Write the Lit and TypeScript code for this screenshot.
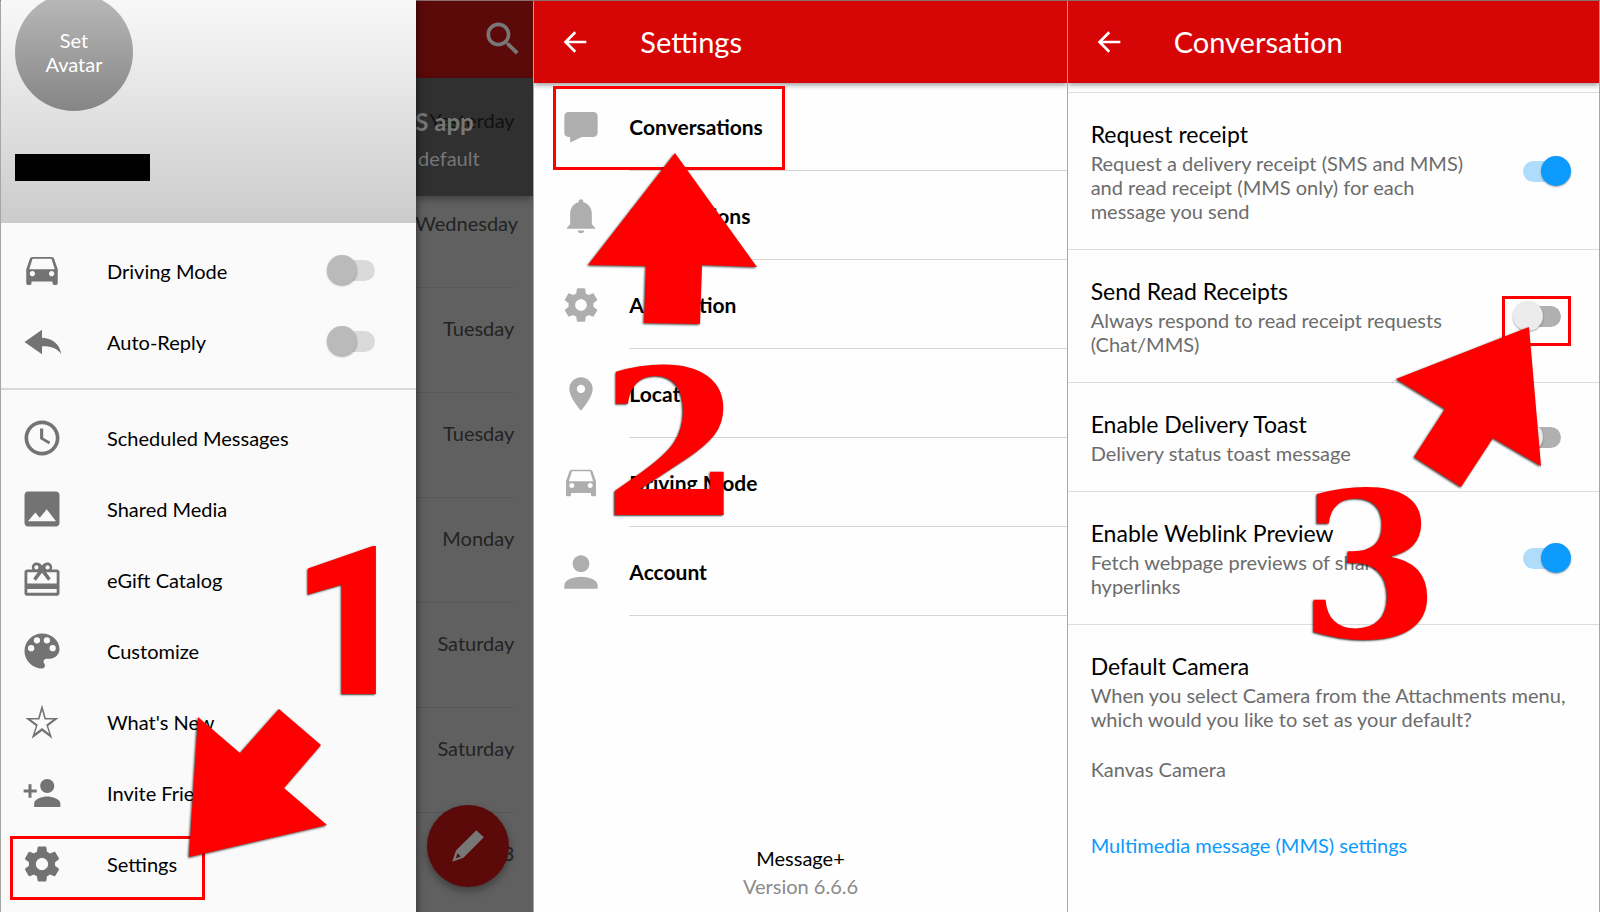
import { LitElement, html, css, svg } from "lit";
import { customElement } from "lit/decorators.js";

const ICONS: Record<string, string> = {
  car: "M18.92 5.01C18.72 4.42 18.16 4 17.5 4h-11c-.66 0-1.21.42-1.42 1.01L3 11v8c0 .55.45 1 1 1h1c.55 0 1-.45 1-1v-1h12v1c0 .55.45 1 1 1h1c.55 0 1-.45 1-1v-8l-2.08-5.99zM6.5 15c-.83 0-1.5-.67-1.5-1.5S5.67 12 6.5 12s1.5.67 1.5 1.5S7.33 15 6.5 15zm11 0c-.83 0-1.5-.67-1.5-1.5s.67-1.5 1.5-1.5 1.5.67 1.5 1.5-.67 1.5-1.5 1.5zM4.7 11l1.9-6h10.800L19.300 11z",
  reply: "M12 9.500V5L2 12l10 7v-4.500c4.500-.2 8.500.8 11 4.500-.8-5.500-4.500-9.200-11-9.500z",
  clock: "M11.990 2C6.470 2 2 6.480 2 12s4.470 10 9.990 10C17.520 22 22 17.520 22 12S17.520 2 11.990 2zM12 19.900c-4.400 0-7.900-3.500-7.900-7.900S7.600 4.100 12 4.100s7.900 3.500 7.900 7.900-3.500 7.900-7.900 7.900zM12.700 6.500h-1.800v6.100l5 3 .9-1.400-4.100-2.400z",
  image: "M22 20V4c0-1.100-.9-2-2-2H4c-1.100 0-2 .9-2 2v16c0 1.100.9 2 2 2h16c1.100 0 2-.9 2-2zM8.200 14l2.500 3.010L14.700 12.200l5.300 6.800H4l4.200-5z",
  gift: "M20.500 6h-3a2.800 2.800 0 0 0 .3-1.300C17.800 3.200 16.600 2 15.100 2c-1.200 0-2.300.6-3.100 1.700C11.200 2.600 10.100 2 8.900 2 7.400 2 6.200 3.200 6.200 4.700c0 .5.1.9.3 1.300h-3C2.700 6 2 6.700 2 7.500v12c0 .8.700 1.500 1.500 1.500h17c.8 0 1.500-.7 1.500-1.500v-12c0-.8-.7-1.500-1.500-1.500zM15.200 3.600a1.200 1.200 0 1 1 0 2.400 1.200 1.200 0 0 1 0-2.400zM8.800 3.600a1.200 1.200 0 1 1 0 2.400 1.200 1.200 0 0 1 0-2.400zM20.400 19.300H3.600v-2.100h16.800zm0-5.300H3.600V7.600h6L7 11.200l1.500 1.200L12 7.900l3.500 4.500 1.500-1.200-2.600-3.600h6z",
  palette: "M12 2C6.490 2 2 6.490 2 12s4.490 10 10 10c1 0 1.700-.8 1.700-1.700 0-.4-.2-.8-.4-1.100-.3-.3-.4-.7-.4-1.100 0-.9.700-1.700 1.700-1.700h2c3 0 5.400-2.500 5.400-5.500C22 6 17.500 2 12 2zM5.800 12.200a1.800 1.800 0 1 1 0-3.600 1.800 1.800 0 0 1 0 3.600zm3.300-4.500a1.800 1.800 0 1 1 0-3.600 1.800 1.800 0 0 1 0 3.600zm5.700 0a1.800 1.800 0 1 1 0-3.600 1.800 1.800 0 0 1 0 3.600zm3.300 4.500a1.800 1.800 0 1 1 0-3.600 1.800 1.800 0 0 1 0 3.600z",
  star: "M12 2l-2.200 7.700H2.500l6 4.600L6.100 21.500 12 17.100l5.900 4.400-2.400-7.200 6-4.600h-7.300zm0 3.400l1.500 5.200h4.900l-4 3 1.700 4.900-4.100-3.100-4.100 3.100 1.700-4.900-4-3h4.900z",
  invite: "M15 12c2.210 0 4-1.790 4-4s-1.790-4-4-4-4 1.790-4 4 1.790 4 4 4zM6 10V7H4.300v3H1.500v1.700h2.800v3H6v-3h3V10H6zm9 4c-2.670 0-7.500 1.340-7.500 4v2H22.500v-2c0-2.660-4.830-4-7.500-4z",
  gear: "M19.430 12.980c.04-.32.07-.64.07-.98s-.03-.66-.07-.98l2.110-1.650c.19-.15.24-.42.12-.64l-2-3.460c-.12-.22-.39-.3-.61-.22l-2.490 1c-.52-.4-1.080-.73-1.690-.98l-.38-2.650C14.460 2.180 14.250 2 14 2h-4c-.25 0-.46.18-.49.42l-.38 2.650c-.61.25-1.170.59-1.690.98l-2.490-1c-.23-.09-.49 0-.61.22l-2 3.460c-.13.22-.07.49.12.64l2.110 1.650c-.04.32-.07.65-.07.98s.03.66.07.98l-2.110 1.650c-.19.15-.24.42-.12.64l2 3.460c.12.22.39.3.61.22l2.490-1c.52.4 1.080.73 1.690.98l.38 2.650c.03.24.24.42.49.42h4c.25 0 .46-.18.49-.42l.38-2.650c.61-.25 1.170-.59 1.690-.98l2.490 1c.23.09.49 0 .61-.22l2-3.460c.12-.22.07-.49-.12-.64l-2.110-1.650zM12 15.500c-1.930 0-3.500-1.570-3.500-3.500s1.570-3.500 3.500-3.500 3.500 1.570 3.500 3.500-1.570 3.500-3.500 3.500z",
  chat: "M19.500 3h-15C3.100 3 2 4.100 2 5.500v10C2 16.900 3.100 18 4.500 18h1v3.300l7-3.300h7c1.400 0 2.500-1.100 2.500-2.500v-10C22 4.100 20.900 3 19.500 3z",
  bell: "M12 22.300c1.100 0 2-.7 2-1.600h-4c0 .9.900 1.600 2 1.600zM18.500 17v-6.500c0-3.300-2-6.100-5.100-6.800V3.300C13.400 2.500 12.800 2 12 2s-1.400.5-1.400 1.300v.4c-3.100.7-5.100 3.500-5.100 6.800V17L3.500 19v.6h17V19z",
  pin: "M12 2C8.130 2 5 5.130 5 9c0 5.250 7 13 7 13s7-7.750 7-13c0-3.870-3.130-7-7-7zm0 9.500c-1.380 0-2.500-1.120-2.500-2.500s1.120-2.500 2.500-2.500 2.500 1.120 2.500 2.500-1.120 2.500-2.500 2.500z",
  person: "M12 12c2.760 0 5-2.240 5-5s-2.240-5-5-5-5 2.240-5 5 2.240 5 5 5zM12 14.800c-4 0-10 1.700-10 5V22h20v-2.200c0-3.300-6-5-10-5z",
  back: "M20.500 11H7.300l5.600-5.600L11.500 4l-8 8 8 8 1.400-1.400L7.300 13h13.200z",
  search: "M15.500 14h-.79l-.28-.27C15.410 12.590 16 11.110 16 9.500 16 5.910 13.090 3 9.500 3S3 5.910 3 9.500 5.910 16 9.500 16c1.610 0 3.090-.59 4.230-1.570l.27.28v.79l5 4.990L20.490 19l-4.990-5zm-6 0C7 14 5 12 5 9.500S7 5 9.500 5 14 7 14 9.500 12 14 9.500 14z",
  pencil: "M2.500 21.500l2.300-6.800L17 2.500l4.500 4.200L9.300 19zM4.700 19.300l2.900-1-1.900-1.900z",
};

const icon = (name: string, cls = "icon") =>
  html`<svg class=${cls} viewBox="0 0 24 24" aria-hidden="true"><path fill-rule="evenodd" d=${ICONS[name]} /></svg>`;

const arrow = (w: number, h: number, points: string) =>
  html`<svg class="arrow" width=${w} height=${h} viewBox="0 0 ${w} ${h}" aria-hidden="true">${svg`<polygon points=${points} />`}</svg>`;

const shared = css`
  * { box-sizing: border-box; }
  :host {
    display: block;
    position: relative;
    min-width: 0;
    overflow: hidden;
    border-left: 1px solid #a6a6a6;
    font-family: Lato, "Open Sans", sans-serif;
    color: #000;
  }
  button {
    font: inherit;
    color: inherit;
    background: none;
    border: 0;
    padding: 0;
    text-align: left;
  }
  svg { display: block; fill: currentColor; flex: none; }
  .icon { width: 40px; height: 40px; }
  .switch {
    appearance: none;
    position: relative;
    flex: none;
    width: 38px;
    height: 21px;
    margin: 0 10px;
    border-radius: 11px;
    background: #b0b0b0;
  }
  .switch::before {
    content: "";
    position: absolute;
    top: -5px;
    left: -10px;
    width: 30px;
    height: 30px;
    border-radius: 50%;
    background: #ececec;
    box-shadow: 0 1px 2px rgba(0, 0, 0, 0.35);
  }
  .switch:checked { background: #b0dcfc; }
  .switch:checked::before { left: 18px; background: #0c9afc; }
  .appbar {
    position: relative;
    display: flex;
    align-items: center;
    height: 83px;
    padding: 0 25px;
    gap: 49px;
    background: #d60606;
    color: #fff;
    box-shadow: 0 2px 5px rgba(0, 0, 0, 0.4);
  }
  .appbar h1 { margin: 0; font-size: 29px; line-height: 36px; font-weight: 400; }
  .back { width: 32px; height: 32px; }
  .arrow, .step, .frame { position: absolute; pointer-events: none; z-index: 3; }
  .arrow { fill: #f00; overflow: visible; filter: drop-shadow(-1px 1px 1px rgba(0, 0, 0, 0.75)); }
  .step {
    color: #f00;
    font-family: "DejaVu Serif", serif;
    font-weight: 700;
    font-size: 202px;
    line-height: 200px;
    text-shadow: -1px 1px 2px rgba(0, 0, 0, 0.75);
  }
  .frame { border: 3px solid #f00; }
`;

@customElement("drawer-screen")
class DrawerScreen extends LitElement {
  static styles = [
    shared,
    css`
      :host { display: flex; background: #606060; }
      .drawer {
        position: relative;
        z-index: 1;
        flex: none;
        width: 78%;
        margin-right: -1px;
        background: #fafafa;
        box-shadow: 1px 0 8px rgba(0, 0, 0, 0.5);
      }
      .profile {
        height: 223px;
        padding: 0 14px;
        overflow: hidden;
        background: linear-gradient(#f8f8f8, #cbcbcb);
      }
      .avatar {
        display: grid;
        place-content: center;
        width: 118px;
        height: 118px;
        margin-top: -7px;
        border-radius: 50%;
        background: linear-gradient(#bababa, #858585);
        color: #fff;
        font-size: 20px;
        line-height: 24px;
        text-align: center;
      }
      .redacted { width: 135px; height: 27px; margin-top: 43px; background: #000; }
      .group { padding: 12px 0 11px; }
      .group + .group { border-top: 2px solid #d8d8d8; }
      .item {
        display: flex;
        align-items: center;
        width: 100%;
        height: 71px;
        padding: 0 31px 0 20px;
        gap: 44px;
        font-size: 20px;
      }
      .item .icon { color: #737373; width: 42px; height: 42px; }
      .item .label { flex: 1; }
      .item .switch { background: #dadada; }
      .item .switch::before { background: #bababa; }
      .behind {
        flex: 1;
        min-width: 0;
        display: flex;
        flex-direction: column;
        color: #232323;
        font-size: 20px;
      }
      .toolbar {
        display: flex;
        justify-content: flex-end;
        align-items: center;
        height: 78px;
        padding-right: 8px;
        background: #5c0909;
        color: #777;
      }
      .toolbar .icon { width: 44px; height: 44px; }
      .banner {
        display: grid;
        height: 118px;
        background: #303030;
        box-shadow: 0 3px 8px rgba(0, 0, 0, 0.35);
      }
      .banner > * { grid-area: 1 / 1; }
      .banner .date { justify-self: end; padding: 30px 19px 0 0; line-height: 24px; color: #101010; }
      .notice {
        display: flex;
        flex-direction: column;
        align-items: flex-end;
        gap: 10px;
        padding: 30px 54px 0 0;
        color: #777;
        white-space: nowrap;
      }
      .notice b { padding-right: 6px; font-size: 24px; line-height: 28px; }
      .notice span { line-height: 24px; }
      .days { list-style: none; margin: 0; padding: 0 19px 0 0; text-align: right; }
      .days li { height: 105px; padding-top: 26px; line-height: 28px; border-bottom: 1px solid #575757; }
      .days li:first-child { height: 92px; padding-top: 13px; }
      .days li:last-child { border: 0; }
      .compose {
        position: absolute;
        right: 24px;
        bottom: 25px;
        display: grid;
        place-items: center;
        width: 82px;
        height: 82px;
        border-radius: 50%;
        background: #5c0909;
        color: #777;
        box-shadow: 0 4px 8px rgba(0, 0, 0, 0.35);
      }
      .drawer-end { height: 6px; }
      .step { left: 290px; top: 523px; font-family: Roboto, sans-serif; font-weight: 900; font-size: 208px; }
      .arrow { left: 188px; top: 709px; }
      .frame { left: 9px; top: 836px; width: 195px; height: 64px; }
      .compose { bottom: 24px; }
      :host .compose { bottom: 31px; }
    `,
  ];

  render() {
    const toggles = [["car", "Driving Mode"], ["reply", "Auto-Reply"]];
    const links = [
      ["clock", "Scheduled Messages"],
      ["image", "Shared Media"],
      ["gift", "eGift Catalog"],
      ["palette", "Customize"],
      ["star", "What's New"],
      ["invite", "Invite Friends"],
      ["gear", "Settings"],
    ];
    const days = ["Wednesday", "Tuesday", "Tuesday", "Monday", "Saturday", "Saturday", "3"];
    return html`
      <nav class="drawer">
        <div class="profile">
          <button class="avatar">Set<br />Avatar</button>
          <div class="redacted"></div>
        </div>
        <div class="group">
          ${toggles.map(([i, t]) => html`<label class="item">${icon(i)}<span class="label">${t}</span><input class="switch" type="checkbox" /></label>`)}
        </div>
        <div class="group">
          ${links.map(([i, t]) => html`<button class="item">${icon(i)}<span class="label">${t}</span></button>`)}
        </div>
      </nav>
      <div class="behind">
        <div class="toolbar"><button aria-label="Search">${icon("search")}</button></div>
        <div class="banner">
          <span class="date">Yesterday</span>
          <div class="notice"><b>S app</b><span>default</span></div>
        </div>
        <ul class="days">${days.map((d) => html`<li>${d}</li>`)}</ul>
      </div>
      <button class="compose" aria-label="Compose">${icon("pencil")}</button>
      <div class="frame"></div>
      ${arrow(138, 148, "9,8 51,44 90,0 132,36 95,79 138,116 0,148")}
      <span class="step">1</span>
    `;
  }
}

@customElement("settings-screen")
class SettingsScreen extends LitElement {
  static styles = [
    shared,
    css`
      :host { display: flex; flex-direction: column; background: #fefefe; }
      .rows { margin-top: -1px; }
      .row { display: flex; align-items: stretch; width: 100%; height: 89px; padding-left: 27px; gap: 28px; }
      .row .icon { align-self: center; color: #aeaeae; }
      .label {
        flex: 1;
        display: flex;
        align-items: center;
        border-bottom: 1px solid #d4d4d4;
        font-size: 21px;
        font-weight: 700;
      }
      .about { margin: auto 0 0; padding-bottom: 18px; text-align: center; font-size: 20px; line-height: 28px; }
      .about p { margin: 0; }
      .version { color: #8a8a8a; }
      .frame { left: 19px; top: 86px; width: 232px; height: 84px; }
      .arrow { left: 54px; top: 153px; }
      .step { left: 67px; top: 344px; }
    `,
  ];

  render() {
    const rows = [
      ["chat", "Conversations"],
      ["bell", "Notifications"],
      ["gear", "Application"],
      ["pin", "Location"],
      ["car", "Driving Mode"],
      ["person", "Account"],
    ];
    return html`
      <header class="appbar">
        <button aria-label="Back">${icon("back", "back")}</button>
        <h1>Settings</h1>
      </header>
      <div class="rows">
        ${rows.map(([i, t]) => html`<button class="row">${icon(i)}<span class="label">${t}</span></button>`)}
      </div>
      <footer class="about"><p>Message+</p><p class="version">Version 6.6.6</p></footer>
      <div class="frame"></div>
      ${arrow(169, 171, "87,0 169,114 114,112 112,171 56,170 58,113 0,112")}
      <span class="step">2</span>
    `;
  }
}

@customElement("conversation-screen")
class ConversationScreen extends LitElement {
  static styles = [
    shared,
    css`
      :host { background: #fefefe; border-right: 1px solid #a6a6a6; }
      .list { margin-top: 9px; border-top: 1px solid #dcdcdc; }
      .row {
        display: flex;
        align-items: center;
        justify-content: space-between;
        padding: 26px 28px 26px 23px;
        border-bottom: 1px solid #dcdcdc;
      }
      .text { max-width: 390px; }
      .title, .desc, .choice { display: block; }
      .title { font-size: 23px; line-height: 30px; margin-bottom: 2px; }
      .desc, .choice { font-size: 20px; line-height: 24px; color: #6c6c6c; }
      .camera { display: block; width: 100%; padding: 26px 23px 0; }
      .choice { margin-top: 26px; }
      .link { display: inline-block; margin: 52px 23px 0; font-size: 20px; line-height: 24px; color: #0c9afc; text-decoration: none; }
      .frame { right: 28px; top: 296px; width: 69px; height: 50px; }
      .arrow { right: 58px; top: 327px; }
      .step { right: 159px; top: 466px; }
    `,
  ];

  render() {
    const rows: [string, string, boolean][] = [
      ["Request receipt", "Request a delivery receipt (SMS and MMS) and read receipt (MMS only) for each message you send", true],
      ["Send Read Receipts", "Always respond to read receipt requests (Chat/MMS)", false],
      ["Enable Delivery Toast", "Delivery status toast message", false],
      ["Enable Weblink Preview", "Fetch webpage previews of shared hyperlinks", true],
    ];
    return html`
      <header class="appbar">
        <button aria-label="Back">${icon("back", "back")}</button>
        <h1>Conversation</h1>
      </header>
      <div class="list">
        ${rows.map(([t, d, on]) => html`
          <label class="row">
            <span class="text"><span class="title">${t}</span><span class="desc">${d}</span></span>
            <input class="switch" type="checkbox" ?checked=${on} />
          </label>`)}
        <button class="camera">
          <span class="title">Default Camera</span>
          <span class="desc">When you select Camera from the Attachments menu, which would you like to set as your default?</span>
          <span class="choice">Kanvas Camera</span>
        </button>
        <a class="link" href="#mms">Multimedia message (MMS) settings</a>
      </div>
      <div class="frame"></div>
      ${arrow(145, 160, "133,0 145,139 97,111 65,160 18,130 49,82 0,52")}
      <span class="step">3</span>
    `;
  }
}

@customElement("app-root")
class AppRoot extends LitElement {
  static styles = css`
    :host {
      display: grid;
      position: relative;
      grid-template-columns: repeat(3, minmax(0, 1fr));
      min-height: 100vh;
    }
    :host::after {
      content: "";
      position: absolute;
      inset: 0;
      border-top: 1px solid #8c7070;
      border-bottom: 1px solid #a6a6a6;
      pointer-events: none;
    }
  `;

  render() {
    return html`
      <drawer-screen></drawer-screen>
      <settings-screen></settings-screen>
      <conversation-screen></conversation-screen>
    `;
  }
}
